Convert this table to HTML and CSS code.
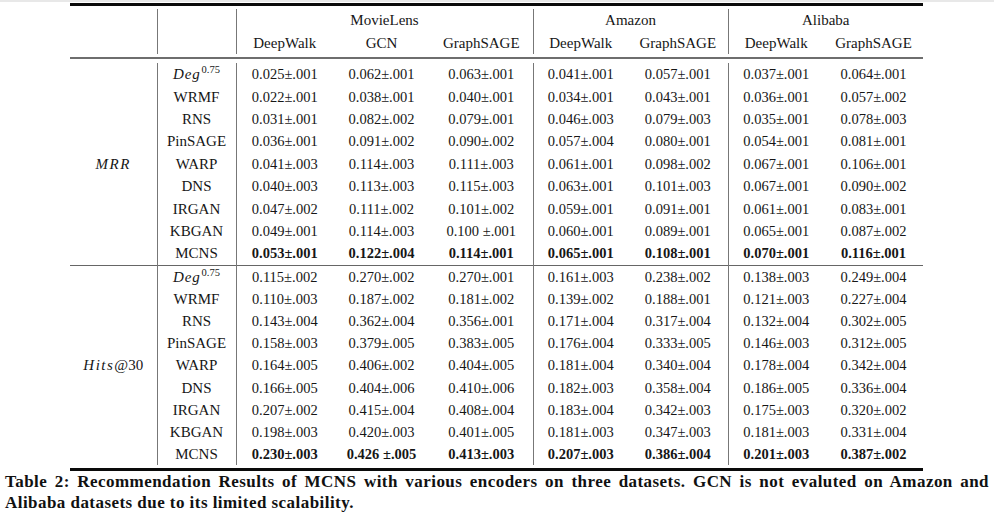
FILE: index.html
```html
<!DOCTYPE html>
<html>
<head>
<meta charset="utf-8">
<link rel="stylesheet" href="styles.css">
</head>
<body>
<div class="strip"></div>
<table class="res">
  <colgroup>
    <col class="c-metric"><col class="c-method">
    <col class="c-97"><col class="c-97"><col class="c-103">
    <col class="c-95"><col class="c-100">
    <col class="c-96"><col class="c-99">
  </colgroup>
  <tbody>
    <tr class="rule-row top"><td colspan="9"><div class="line thick"></div></td></tr>
    <tr class="hrow">
      <td></td><td class="vl"></td>
      <td class="vl" colspan="3">MovieLens</td>
      <td class="vl" colspan="2">Amazon</td>
      <td class="vl" colspan="2">Alibaba</td>
    </tr>
    <tr class="hrow">
      <td></td><td class="vl"></td>
      <td class="vl">DeepWalk</td><td>GCN</td><td>GraphSAGE</td>
      <td class="vl">DeepWalk</td><td>GraphSAGE</td>
      <td class="vl">DeepWalk</td><td>GraphSAGE</td>
    </tr>
    <tr class="rule-row mid"><td colspan="9"><div class="line head"></div></td></tr>
  </tbody>
  <tbody id="mrr"></tbody>
  <tbody id="hits" class="second"></tbody>
  <tbody>
    <tr class="rule-row bottom"><td colspan="9"><div class="line thick"></div></td></tr>
  </tbody>
</table>
<p class="caption">Table 2: Recommendation Results of MCNS with various encoders on three datasets. GCN is not evaluted on Amazon and Alibaba datasets due to its limited scalability.</p>
<script src="app.js"></script>
</body>
</html>
```

FILE: app.js
```js
const methods = ['Deg', 'WRMF', 'RNS', 'PinSAGE', 'WARP', 'DNS', 'IRGAN', 'KBGAN', 'MCNS'];
const mrr = [
  ['0.025±.001','0.062±.001','0.063±.001','0.041±.001','0.057±.001','0.037±.001','0.064±.001'],
  ['0.022±.001','0.038±.001','0.040±.001','0.034±.001','0.043±.001','0.036±.001','0.057±.002'],
  ['0.031±.001','0.082±.002','0.079±.001','0.046±.003','0.079±.003','0.035±.001','0.078±.003'],
  ['0.036±.001','0.091±.002','0.090±.002','0.057±.004','0.080±.001','0.054±.001','0.081±.001'],
  ['0.041±.003','0.114±.003','0.111±.003','0.061±.001','0.098±.002','0.067±.001','0.106±.001'],
  ['0.040±.003','0.113±.003','0.115±.003','0.063±.001','0.101±.003','0.067±.001','0.090±.002'],
  ['0.047±.002','0.111±.002','0.101±.002','0.059±.001','0.091±.001','0.061±.001','0.083±.001'],
  ['0.049±.001','0.114±.003','0.100 ±.001','0.060±.001','0.089±.001','0.065±.001','0.087±.002'],
  ['0.053±.001','0.122±.004','0.114±.001','0.065±.001','0.108±.001','0.070±.001','0.116±.001']
];
const hits = [
  ['0.115±.002','0.270±.002','0.270±.001','0.161±.003','0.238±.002','0.138±.003','0.249±.004'],
  ['0.110±.003','0.187±.002','0.181±.002','0.139±.002','0.188±.001','0.121±.003','0.227±.004'],
  ['0.143±.004','0.362±.004','0.356±.001','0.171±.004','0.317±.004','0.132±.004','0.302±.005'],
  ['0.158±.003','0.379±.005','0.383±.005','0.176±.004','0.333±.005','0.146±.003','0.312±.005'],
  ['0.164±.005','0.406±.002','0.404±.005','0.181±.004','0.340±.004','0.178±.004','0.342±.004'],
  ['0.166±.005','0.404±.006','0.410±.006','0.182±.003','0.358±.004','0.186±.005','0.336±.004'],
  ['0.207±.002','0.415±.004','0.408±.004','0.183±.004','0.342±.003','0.175±.003','0.320±.002'],
  ['0.198±.003','0.420±.003','0.401±.005','0.181±.003','0.347±.003','0.181±.003','0.331±.004'],
  ['0.230±.003','0.426 ±.005','0.413±.003','0.207±.003','0.386±.004','0.201±.003','0.387±.002']
];
const vlCols = [0, 3, 5];

function build(id, data, labelHtml) {
  const tb = document.getElementById(id);
  data.forEach((row, i) => {
    const tr = document.createElement('tr');
    tr.className = 'drow' + (i === data.length - 1 ? ' best' : '');
    if (i === 0) {
      const th = document.createElement('td');
      th.rowSpan = data.length;
      th.className = 'metric';
      th.innerHTML = labelHtml;
      tr.appendChild(th);
    }
    const m = document.createElement('td');
    m.className = 'vl method';
    m.innerHTML = methods[i] === 'Deg'
      ? '<span class="it">Deg</span><sup>0.75</sup>'
      : methods[i];
    tr.appendChild(m);
    row.forEach((v, j) => {
      const td = document.createElement('td');
      td.className = 'num' + (vlCols.includes(j) ? ' vl' : '');
      td.textContent = v;
      tr.appendChild(td);
    });
    tb.appendChild(tr);
  });
}
build('mrr', mrr, '<span class="it sp">MRR</span>');
build('hits', hits, '<span class="it sp">Hits</span>@30');
```

FILE: styles.css
```css
html, body {
  margin: 0;
  padding: 0;
  background: #fff;
}
body {
  font-family: "Liberation Serif", "Times New Roman", serif;
  color: #161616;
  width: 994px;
  height: 515px;
  overflow: hidden;
}
.strip {
  height: 2px;
  background: #e8e8e8;
}
.res {
  margin: 1px 0 0 70px;
  border-collapse: collapse;
  table-layout: fixed;
  width: 853px;
  font-family: "Liberation Serif", "Times New Roman", serif;
  font-size: 15px;
}
.c-metric { width: 87px; }
.c-method { width: 79px; }
.c-97 { width: 97px; }
.c-103 { width: 103px; }
.c-95 { width: 95px; }
.c-100 { width: 100px; }
.c-96 { width: 96px; }
.c-99 { width: 99px; }
.res td {
  padding: 0;
  text-align: center;
  white-space: nowrap;
  vertical-align: middle;
  font-family: "Liberation Serif", "Times New Roman", serif;
}
.rule-row td { padding: 0; line-height: 0; font-size: 0; }
.rule-row.top td { height: 6px; vertical-align: top; }
.rule-row.mid td { height: 2px; padding: 3px 0 4px; }
.rule-row.bottom td { height: 3px; padding-top: 3px; vertical-align: top; }
.line.thick { height: 3px; background: #0a0a0a; }
.line.head { height: 2px; background: #6e6e6e; }
.hrow td { height: 22.5px; line-height: 20px; }
.drow td { height: 22.4px; line-height: 18px; }
.second .drow td { height: 22.2px; }
.res td.vl { border-left: 1.4px solid #777; }
.second tr:first-child td { border-top: 1.4px solid #666; }
.best .num { font-weight: bold; }
.num { font-size: 14.5px; }
.metric { font-size: 15px; }
.it { font-style: italic; }
.sp { letter-spacing: 1.5px; }
.method sup {
  font-size: 10.5px;
  vertical-align: 6px;
  line-height: 0;
  margin-left: 1px;
}
.method .it { letter-spacing: 0.8px; }
.caption {
  margin: 0 0 0 5px;
  width: 984px;
  font-size: 17px;
  font-weight: bold;
  line-height: 21px;
  text-align: justify;
  letter-spacing: 0.45px;
  color: #111;
}
```
